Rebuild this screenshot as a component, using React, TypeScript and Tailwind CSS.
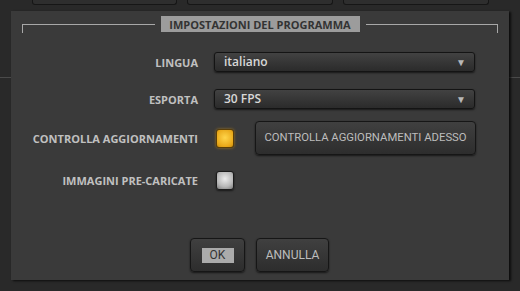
import React from 'react';

const font = { fontFamily: '"Open Sans", "Noto Sans", sans-serif' };

function Select({ value }: { value: string }) {
  return (
    <div className="w-[261px] h-[20px] rounded-[3px] border border-[#141414] bg-gradient-to-b from-[#424242] to-[#2b2b2b] shadow-[0_1px_2px_rgba(0,0,0,0.6)] flex items-center justify-between pl-[9px] pr-[8px]">
      <span className="text-[12px] font-semibold text-[#d8d8d8] leading-none">{value}</span>
      <span className="text-[10px] text-[#b8b8b8] leading-none">▼</span>
    </div>
  );
}

function Row({ label, children, className }: { label: string; children: React.ReactNode; className?: string }) {
  return (
    <div className={`flex items-center ${className ?? ''}`}>
      <div className="w-[187px] text-right text-[11px] font-bold text-[#c0c0c0] leading-none">{label}</div>
      <div className="ml-[16px] flex items-center">{children}</div>
    </div>
  );
}

function Button({ children, className }: { children: React.ReactNode; className?: string }) {
  return (
    <div
      className={`h-[34px] rounded-[4px] border border-[#161616] bg-gradient-to-b from-[#404040] to-[#2d2d2d] shadow-[0_1px_2px_rgba(0,0,0,0.6)] flex items-center justify-center whitespace-nowrap text-[#bdbdbd] font-['Roboto',sans-serif] ${className ?? 'text-[12px]'}`}
    >
      {children}
    </div>
  );
}

export default function App() {
  return (
    <div className="w-[520px] h-[291px] bg-[#292929] overflow-hidden relative" style={font}>
      {/* background toolbar buttons, cut at the top */}
      <div className="flex h-[5px]">
        <div className="ml-[32px] w-[145px] h-[5px] border-x border-b border-[#161616] rounded-b-[3px] bg-[#2e2e2e]" />
        <div className="ml-[10px] w-[146px] h-[5px] border-x border-b border-[#161616] rounded-b-[3px] bg-[#2e2e2e]" />
        <div className="ml-[10px] w-[146px] h-[5px] border-x border-b border-[#161616] rounded-b-[3px] bg-[#2e2e2e]" />
      </div>
      <div className="absolute left-0 right-0 top-[77px] h-px bg-[#4a4a4a]" />

      {/* dialog */}
      <div className="relative ml-[11px] mt-[6px] w-[498px] h-[269px] bg-[#3a3a3a] shadow-[2px_1px_2px_rgba(0,0,0,0.7)] flex flex-col">
        <div className="flex items-start px-[11px] pt-[5px]">
          <div className="flex-1 mt-[8px] h-[9px] border-t border-l border-[#a8a8a8]" />
          <div className="mx-[6px] w-[199px] h-[16px] bg-[#9c9c9c] flex items-center justify-center text-[11px] font-bold text-[#333333] leading-none">
            IMPOSTAZIONI DEL PROGRAMMA
          </div>
          <div className="flex-1 mt-[8px] h-[9px] border-t border-r border-[#a8a8a8]" />
        </div>

        <Row label="LINGUA" className="mt-[19px]">
          <Select value="italiano" />
        </Row>
        <Row label="ESPORTA" className="mt-[17px]">
          <Select value="30 FPS" />
        </Row>
        <Row label="CONTROLLA AGGIORNAMENTI" className="mt-[12px]">
          <div className="ml-[2px] w-[18px] h-[19px] rounded-[3px] border border-[#5a3e08] bg-[radial-gradient(circle_at_50%_45%,#ffd54a,#e9a91a_70%,#c88a0c)] shadow-[0_0_3px_rgba(230,160,20,0.6)]" />
          <Button className="ml-[21px] w-[221px] h-[32px] border-[#5f5a32] text-[11.3px]">CONTROLLA AGGIORNAMENTI ADESSO</Button>
        </Row>
        <Row label="IMMAGINI PRE-CARICATE" className="mt-[16px]">
          <div className="ml-[2px] w-[18px] h-[19px] rounded-[3px] border border-[#1c1c1c] bg-[radial-gradient(circle_at_50%_40%,#ececec,#b8b8b8_60%,#7a7a7a)] shadow-[0_1px_2px_rgba(0,0,0,0.6)]" />
        </Row>

        <div className="mt-[48px] ml-[179px] flex gap-[11px]">
          <Button className="w-[55px] text-[12px]">
            <span className="bg-[#ababab] text-[#333333] w-[32px] h-[15px] flex items-center justify-center leading-none">OK</span>
          </Button>
          <Button className="w-[73px] text-[12px]">ANNULLA</Button>
        </div>
      </div>
    </div>
  );
}
